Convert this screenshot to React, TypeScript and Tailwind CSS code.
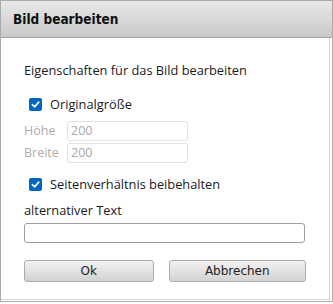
import React from "react";

const uiFont = { fontFamily: '"Open Sans", "Liberation Sans", Arial, sans-serif' };

function Check({ label }: { label: string }) {
  return (
    <div className="flex h-[16px] items-center pl-[5px]">
      <span className="flex h-[13px] w-[13px] items-center justify-center rounded-[2px] bg-[#0067c0]">
        <svg width="9" height="9" viewBox="0 0 10 10" fill="none">
          <path d="M1.5 5.2 L4 7.6 L8.6 2.4" stroke="white" strokeWidth="1.8" strokeLinecap="round" strokeLinejoin="round" />
        </svg>
      </span>
      <span className="ml-[8px] text-[12.8px] leading-[16px] text-[#1a1a1a]">{label}</span>
    </div>
  );
}

function SizeRow({ label }: { label: string }) {
  return (
    <div className="flex h-[20px] items-center">
      <span className="w-[43px] text-[12.5px] text-[#b5abab]">{label}</span>
      <div className="flex h-[20px] w-[121px] items-center rounded-[3px] border border-[#e2e2e2] pl-[3px] text-[12.5px] text-[#a8a8a8]">
        200
      </div>
    </div>
  );
}

export default function App() {
  return (
    <div className="h-[304px] w-[333px] bg-white" style={uiFont}>
      <div className="flex h-[302px] w-[333px] flex-col border border-[#ababab]">
        <div className="flex h-[37px] shrink-0 items-center border-b border-[#a3a3a3] bg-gradient-to-b from-[#e9e9e9] to-[#c8c8c8] pl-[12px]">
          <span
            className="text-[13.5px] font-bold text-[#111]"
            style={{ fontFamily: '"DejaVu Sans Condensed", "Liberation Sans", sans-serif' }}
          >
            Bild bearbeiten
          </span>
        </div>
        <div className="mb-[1px] mr-[2px] flex flex-1 flex-col border-b border-r border-[#d4d4d4] px-[23px] pt-[24px]">
          <p className="h-[16px] text-[12.8px] leading-[16px] text-[#1a1a1a]">Eigenschaften für das Bild bearbeiten</p>
          <div className="mt-[18px]">
            <Check label="Originalgröße" />
          </div>
          <div className="mt-[9px] flex flex-col gap-[2px]">
            <SizeRow label="Höhe" />
            <SizeRow label="Breite" />
          </div>
          <div className="mt-[13px]">
            <Check label="Seitenverhältnis beibehalten" />
          </div>
          <p className="mt-[10px] h-[16px] text-[12.8px] leading-[16px] text-[#1a1a1a]">alternativer Text</p>
          <div className="mt-[5px] h-[20px] w-[281px] rounded-[3px] border border-[#9e9e9e]" />
          <div
            className="mt-[17px] flex gap-[15px] text-[12px] text-[#222]"
            style={{ fontFamily: '"DejaVu Sans", Verdana, sans-serif' }}
          >
            <button className="flex h-[22px] w-[130px] items-center justify-center rounded-[3px] border border-[#acacac] bg-gradient-to-b from-[#f2f2f2] to-[#d3d3d3]">
              Ok
            </button>
            <button className="flex h-[22px] w-[138px] items-center justify-center rounded-[3px] border border-[#acacac] bg-gradient-to-b from-[#f2f2f2] to-[#d3d3d3]">
              Abbrechen
            </button>
          </div>
        </div>
      </div>
    </div>
  );
}
